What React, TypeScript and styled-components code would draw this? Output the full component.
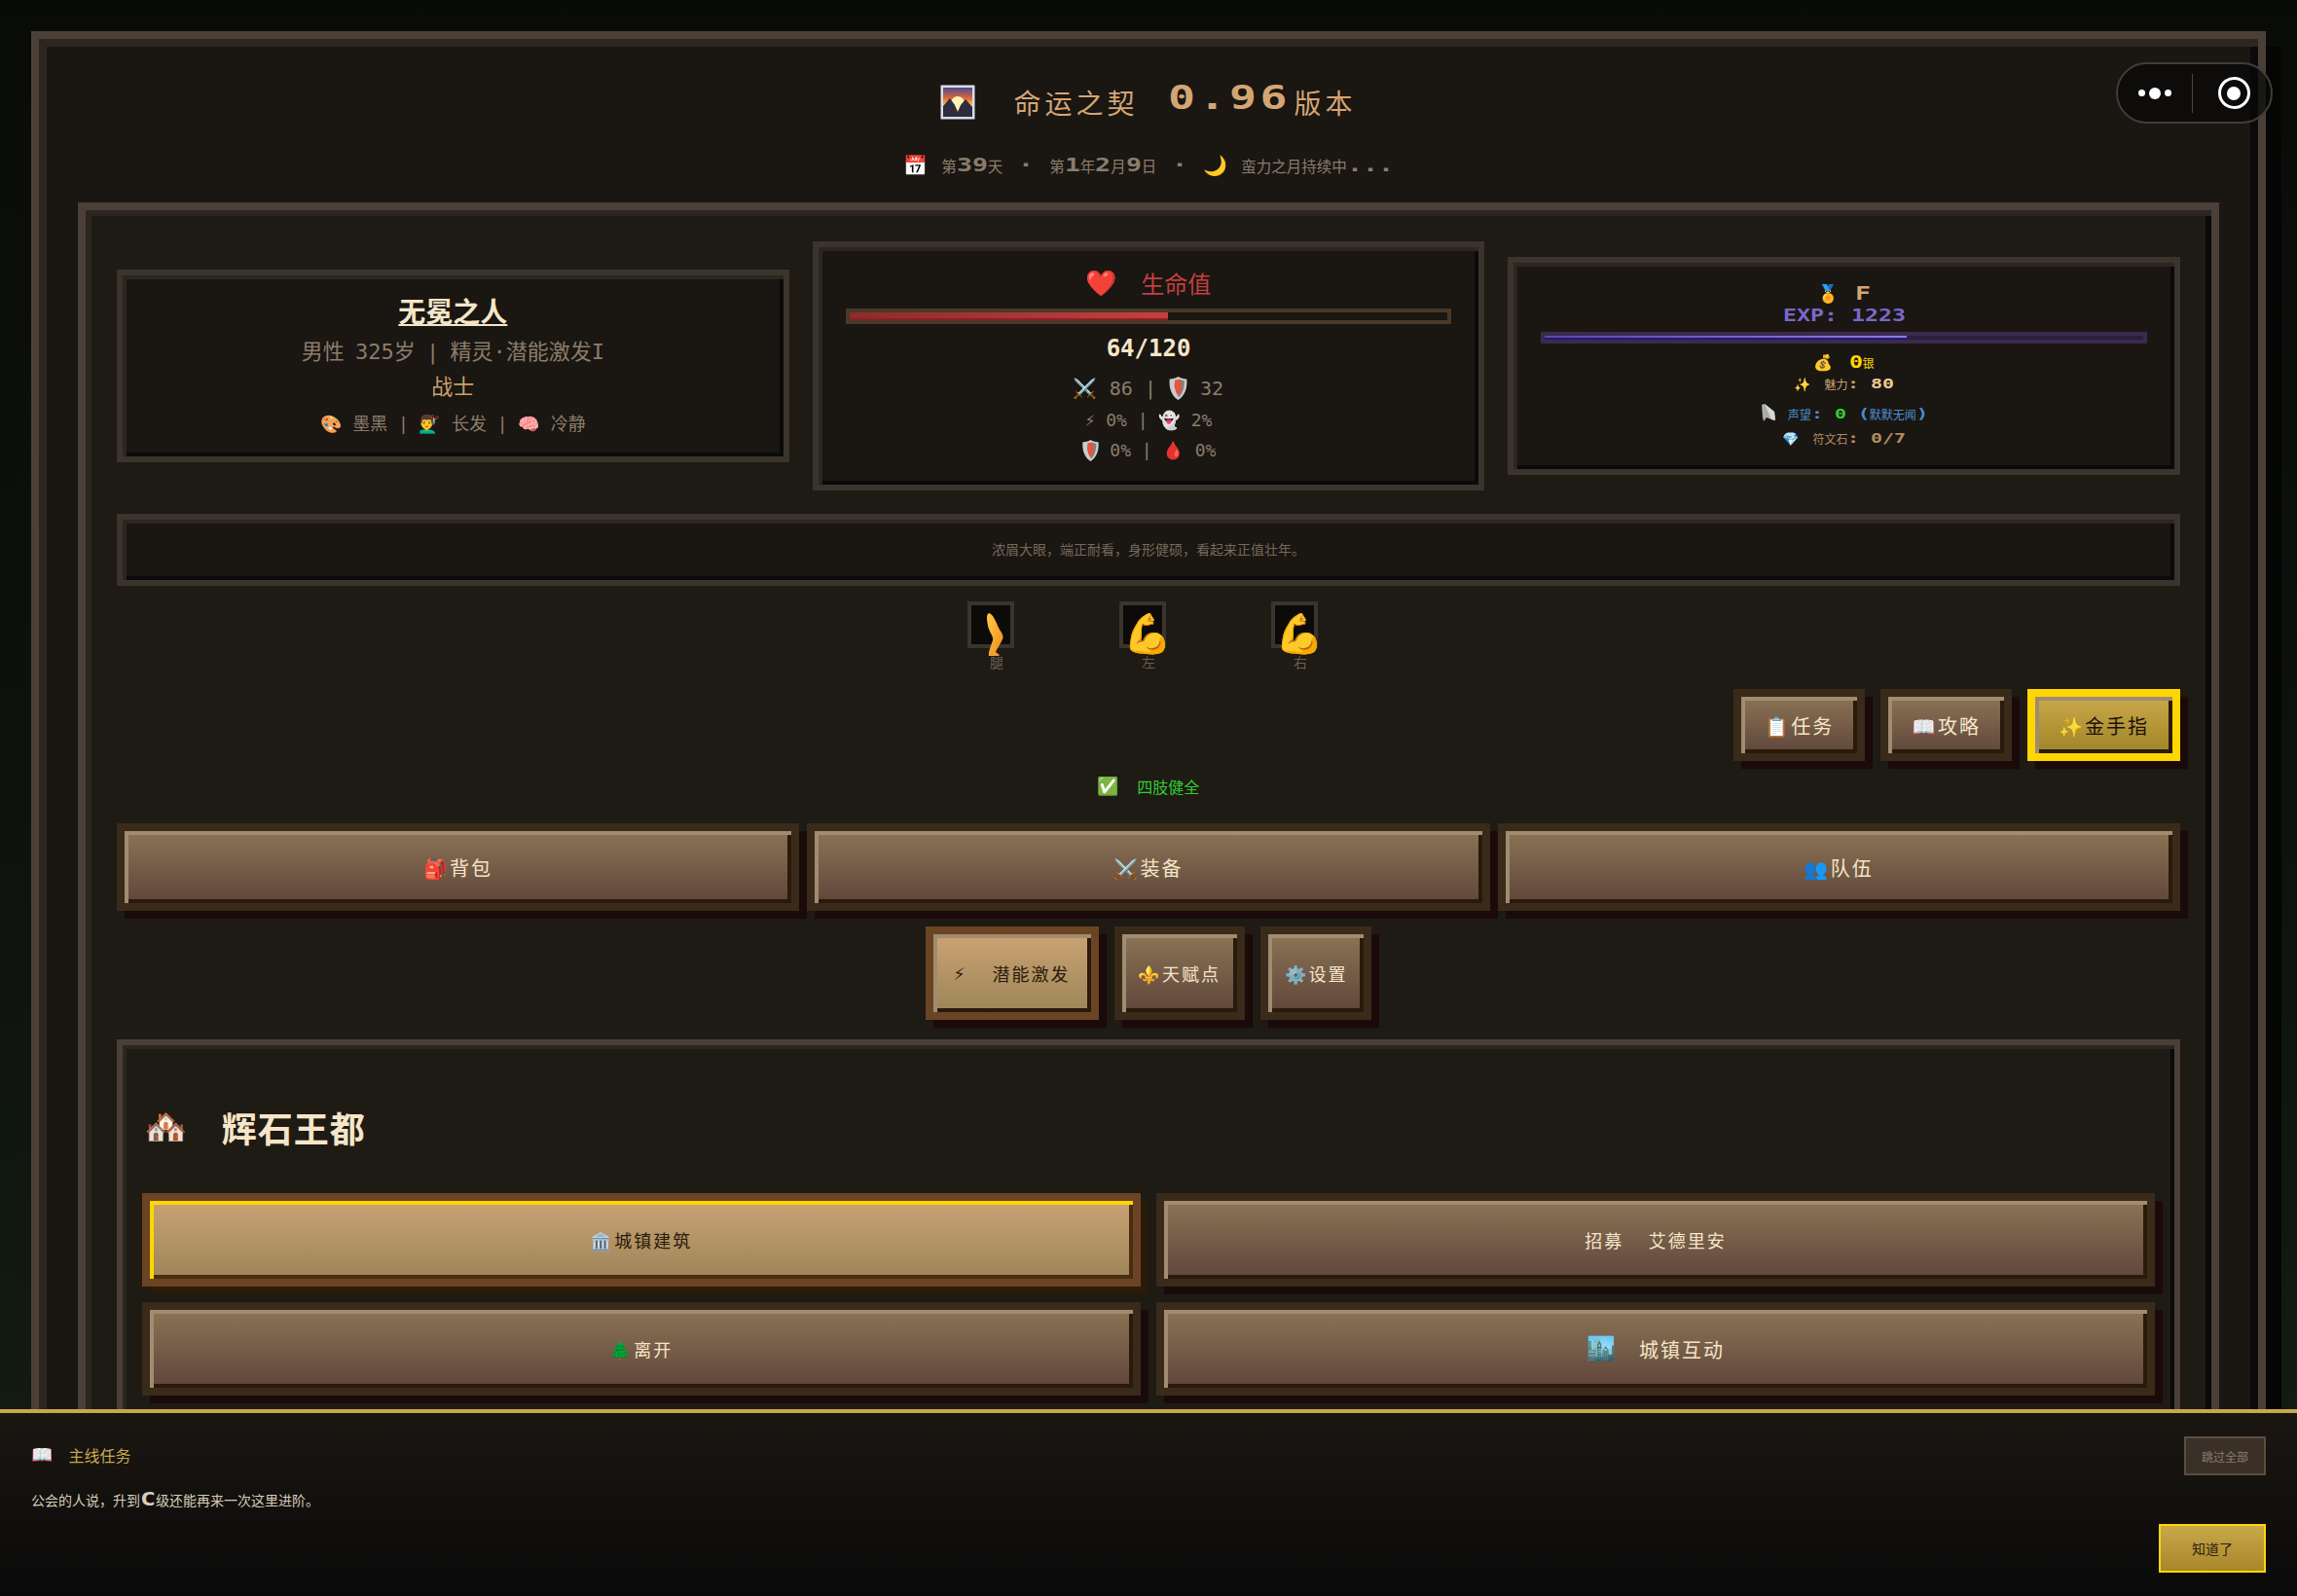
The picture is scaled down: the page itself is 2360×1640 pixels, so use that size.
import React from "react";
import styled, { createGlobalStyle, css } from "styled-components";

const GlobalStyle = createGlobalStyle`
  html, body {
    margin: 0;
    padding: 0;
    width: 2360px;
    height: 1640px;
    overflow: hidden;
    background: #0a0c08;
  }
  body {
    font-family: "DejaVu Sans Mono", "Noto Sans CJK SC", "Noto Color Emoji", monospace;
  }
  * { box-sizing: border-box; }
`;

const PIXEL_SCALE = 1.385;

const PixelBox = styled.span<{ $s: number; $n: number; $ls: number }>`
  display: inline-block;
  white-space: pre;
  font-family: "DejaVu Sans Mono", monospace;
  font-weight: 700;
  line-height: 1;
  font-size: ${(p) => p.$s * 1.2}px;
  letter-spacing: ${(p) => p.$ls / PIXEL_SCALE}px;
  width: calc(${(p) => p.$n * PIXEL_SCALE}ch + ${(p) => p.$n * p.$ls}px);
  transform: scaleX(${PIXEL_SCALE});
  transform-origin: left center;
  color: ${(p) => p.color || "inherit"};
`;

const Pixel = ({ s, ls = 0, color, children }: { s: number; ls?: number; color?: string; children: string }) => (
  <PixelBox $s={s} $n={children.length} $ls={ls} color={color}>
    {children}
  </PixelBox>
);

const SunriseIcon = () => (
  <svg width="36" height="36" viewBox="0 0 36 36">
    <defs>
      <linearGradient id="sky" x1="0" y1="0" x2="0" y2="1">
        <stop offset="0" stopColor="#4d4a94" />
        <stop offset="0.35" stopColor="#d8643c" />
        <stop offset="0.6" stopColor="#ffc24a" />
      </linearGradient>
    </defs>
    <rect x="0.5" y="0.5" width="35" height="35" fill="#d9dee8" />
    <rect x="3" y="3" width="30" height="30" fill="url(#sky)" />
    <circle cx="18" cy="19" r="7" fill="#fff3b8" />
    <path d="M3 33 V22 L10 14 L15 21 L18 28 L21 21 L26 15 L33 23 V33 Z" fill="#2e2c3e" />
  </svg>
);

const LegIcon = () => (
  <svg width="21" height="44" viewBox="0 0 21 44">
    <defs>
      <linearGradient id="leg" x1="0" y1="0" x2="1" y2="1">
        <stop offset="0" stopColor="#ffcb45" />
        <stop offset="1" stopColor="#ee8a1c" />
      </linearGradient>
    </defs>
    <path
      d="M3 0 C7 1 10 8 13 15 C15 19 19 23 17 27 C14 33 11 37 10 40 L14 43 L13 44 L3 44 C2 41 5 34 7 28 C8 24 3 19 2 13 C1 8 0 1 3 0 Z"
      fill="url(#leg)"
    />
  </svg>
);

const ShieldShape = styled.svg`
  vertical-align: -5px;
`;

const ShieldIcon = ({ w, h }: { w: number; h: number }) => (
  <ShieldShape width={w} height={h} viewBox="0 0 24 30">
    <path d="M12 0 C15 2 19 3 23 3 C24 14 21 24 12 30 C3 24 0 14 1 3 C5 3 9 2 12 0 Z" fill="#c9ccd0" />
    <path d="M12 3 C15 4 17 5 20 5 C20 14 18 22 12 27 Z" fill="#7d8086" />
    <path d="M8 4 L16 4 L15 8 L17 11 L15 14 L17 17 L14 21 L12 25 L9 20 L7 12 Z" fill="#e4573b" />
  </ShieldShape>
);

const HornIcon = () => (
  <svg width="16" height="20" viewBox="0 0 16 20">
    <path d="M1 2 L4 1 L14 9 L15 18 L11 17 L6 15 L3 19 L2 15 Z" fill="#a9acab" />
    <path d="M4 1 L14 9 L15 18 L11 17 Z" fill="#d6d8d6" />
  </svg>
);

const Page = styled.div`
  position: relative;
  width: 2360px;
  height: 1640px;
  overflow: hidden;
  padding: 32px;
  background: linear-gradient(180deg, #090b07 0%, #0d120c 50%, #141d14 100%);
`;

const Frame = styled.div`
  width: 2296px;
  min-height: 1700px;
  padding: 40px;
  background: #1a1612;
  border: 8px solid #4a4038;
  box-shadow: inset 8px 8px 0 #2d2620, inset -8px -8px 0 #0a0a0a, 16px 16px 0 #050505;
`;

const Capsule = styled.div`
  position: absolute;
  left: 2174px;
  top: 64px;
  width: 161px;
  height: 63px;
  display: flex;
  align-items: center;
  border: 2px solid #3f3d3a;
  border-radius: 32px;
  background: rgba(8, 8, 8, 0.72);
`;

const CapsuleSide = styled.div<{ $shift?: number }>`
  flex: 1;
  height: 100%;
  display: flex;
  align-items: center;
  justify-content: center;
  gap: 4px;
  padding-left: ${(p) => p.$shift || 0}px;
`;

const CapsuleLine = styled.div`
  width: 1px;
  height: 40px;
  background: #4a4845;
`;

const Dot = styled.i<{ $big?: boolean }>`
  display: block;
  width: ${(p) => (p.$big ? 12 : 7)}px;
  height: ${(p) => (p.$big ? 12 : 7)}px;
  border-radius: 50%;
  background: #fff;
`;

const Ring = styled.div`
  width: 33px;
  height: 33px;
  border: 3px solid #fff;
  border-radius: 50%;
  display: flex;
  align-items: center;
  justify-content: center;
  &::after {
    content: "";
    width: 14px;
    height: 14px;
    border-radius: 50%;
    background: #fff;
  }
`;

const TitleRow = styled.h1`
  margin: 0;
  height: 48px;
  padding-top: 1px;
  display: flex;
  align-items: center;
  justify-content: center;
  font-size: 28px;
  font-weight: 400;
  letter-spacing: 4px;
  color: #d4a574;
`;

const TitleIcon = styled.span`
  display: flex;
  margin-right: 39px;
`;

const Version = styled.span`
  margin: -6px 4px 0 30px;
`;

const SubLine = styled.div`
  margin-top: 30px;
  height: 24px;
  display: flex;
  align-items: center;
  justify-content: center;
  white-space: pre;
  font-size: 15.5px;
  color: #8b7d6b;
`;

const Em = styled.span<{ $size?: number; $gap?: number }>`
  font-size: ${(p) => p.$size || 20}px;
  margin-right: ${(p) => p.$gap || 0}px;
  line-height: 1;
  letter-spacing: 0;
`;

const Panel = styled.div`
  margin-top: 26px;
  padding: 32px;
  background: #1e1a14;
  border: 8px solid #4a4038;
  box-shadow: inset 6px 6px 0 #2d2620, inset -6px -6px 0 #0a0a0a;
`;

const TopRow = styled.div`
  display: grid;
  grid-template-columns: repeat(3, 1fr);
  gap: 24px;
  align-items: center;
`;

const Card = styled.div<{ $h: number; $top?: number }>`
  height: ${(p) => p.$h}px;
  display: flex;
  flex-direction: column;
  align-items: center;
  justify-content: center;
  padding: ${(p) => p.$top || 0}px 28px 0;
  background: #1a1612;
  border: 6px solid #3a342c;
  box-shadow: inset 4px 4px 0 #2a2620, inset -4px -4px 0 #0a0a0a;
  color: #8b7d6b;
`;

const Name = styled.div`
  margin-bottom: 5px;
  font-size: 28px;
  font-weight: 700;
  line-height: 34px;
  color: #f5e6c8;
  text-decoration: underline;
`;

const InfoLine = styled.div<{ $size: number; $color?: string; $h: number; $tight?: boolean }>`
  font-size: ${(p) => p.$size}px;
  line-height: ${(p) => p.$h}px;
  color: ${(p) => p.$color || "#8b7d6b"};
  white-space: pre;
  word-spacing: ${(p) => (p.$tight ? -2 : 0)}px;
`;

const HpTitle = styled.div`
  display: flex;
  align-items: center;
  gap: 24px;
  height: 34px;
  font-size: 24px;
  color: #c44040;
`;

const Bar = styled.div<{ $line: string; $bg: string; $h: number; $mt?: number }>`
  width: 100%;
  flex: none;
  height: ${(p) => p.$h}px;
  margin-top: ${(p) => p.$mt || 0}px;
  border: 4px solid ${(p) => p.$line};
  background: ${(p) => p.$bg};
`;

const Fill = styled.div<{ $fill: string; $shade: string }>`
  height: 100%;
  background: ${(p) => p.$fill};
  box-shadow: inset 0 -2px 0 ${(p) => p.$shade};
`;

const HpValue = styled.div`
  margin: 6px 0 4px;
  font-size: 24px;
  font-weight: 700;
  line-height: 38px;
  color: #f5e6c8;
`;

const RankLine = styled.div`
  display: flex;
  align-items: center;
  justify-content: center;
  height: 22px;
  color: #d4a574;
`;

const ExpLine = styled.div`
  height: 16px;
  margin: 4px 0 8px;
  display: flex;
  align-items: center;
  color: #7b68c8;
`;

const SmallLine = styled.div<{ $color?: string; $h: number; $mt?: number }>`
  height: ${(p) => p.$h}px;
  margin-top: ${(p) => p.$mt || 0}px;
  display: flex;
  align-items: center;
  justify-content: center;
  white-space: pre;
  font-size: 12px;
  color: ${(p) => p.$color || "#c9a06f"};
`;

const Desc = styled.div`
  margin-top: 24px;
  height: 74px;
  padding-bottom: 2px;
  display: flex;
  align-items: center;
  justify-content: center;
  font-size: 14px;
  color: #756959;
  background: #1a1612;
  border: 6px solid #3a342c;
  box-shadow: inset 4px 4px 0 #2a2620, inset -4px -4px 0 #0a0a0a;
`;

const Limbs = styled.div`
  margin-top: 16px;
  padding-right: 12px;
  display: flex;
  justify-content: center;
  gap: 108px;
`;

const Limb = styled.div`
  width: 48px;
  height: 70px;
  display: flex;
  flex-direction: column;
  align-items: center;
  position: relative;
`;

const LimbBox = styled.div`
  width: 48px;
  height: 48px;
  background: #0d0b09;
  border: 4px solid #3a342c;
`;

const LimbIcon = styled.span<{ $left: number; $top: number }>`
  position: absolute;
  display: flex;
  left: ${(p) => p.$left}px;
  top: ${(p) => p.$top}px;
  font-size: 40px;
  line-height: 44px;
`;

const LimbLabel = styled.span`
  margin: 8px 0 0 12px;
  font-size: 14px;
  line-height: 14px;
  color: #6b5f4f;
`;

const ActionRow = styled.div`
  margin-top: 20px;
  display: flex;
  justify-content: flex-end;
  gap: 16px;
`;

const raised = (bottom: string) => css`
  box-shadow: 8px 8px 0 #1a0a0a, inset 4px 4px 0 #a08c70, inset -4px -4px 0 ${bottom};
`;

const tones = {
  plain: css`
    background: linear-gradient(180deg, #8b7355 0%, #5f463a 100%);
    border-color: #3a2a1a;
    color: #f5e6c8;
    ${raised("#2a1a0a")}
  `,
  active: css`
    background: linear-gradient(180deg, #cba274 0%, #9c8558 100%);
    border-color: #6b4423;
    color: #2a1a0a;
    ${raised("#2a1a0a")}
  `,
  location: css`
    background: linear-gradient(180deg, #cba274 0%, #9c8558 100%);
    border-color: #6b4423;
    color: #2a1a0a;
    box-shadow: 8px 8px 0 #2a1a0a, inset 4px 4px 0 #ffd700, inset -4px -4px 0 #4a2c10;
  `,
  gold: css`
    background: linear-gradient(180deg, #c9a84a 0%, #a08428 100%);
    border-color: #ffd700;
    color: #1a1208;
    ${raised("#2a1a0a")}
  `,
};

const GameButton = styled.button<{ $tone?: keyof typeof tones; $h: number; $pad?: number; $size?: number }>`
  height: ${(p) => p.$h}px;
  padding: 0 ${(p) => p.$pad ?? 17}px;
  display: flex;
  align-items: center;
  justify-content: center;
  border: 8px solid;
  border-radius: 0;
  font-family: inherit;
  font-size: ${(p) => p.$size || 20}px;
  letter-spacing: 2px;
  white-space: pre;
  ${(p) => tones[p.$tone || "plain"]}
`;

const HealthLine = styled.div`
  height: 20px;
  margin-top: 16px;
  display: flex;
  align-items: center;
  justify-content: center;
  gap: 18px;
  font-size: 16px;
  color: #32cd32;
`;

const MainRow = styled.div`
  margin-top: 28px;
  display: grid;
  grid-template-columns: repeat(3, 1fr);
  gap: 8px;
`;

const SubRow = styled.div`
  margin-top: 16px;
  display: flex;
  justify-content: center;
  gap: 16px;
`;

const Location = styled.div`
  margin-top: 20px;
  padding: 62px 20px 40px;
  background: #1e1a14;
  border: 6px solid #4a4038;
  box-shadow: inset 4px 4px 0 #2d2620, inset -4px -4px 0 #0a0a0a;
`;

const LocationTitle = styled.h2`
  margin: 0 0 46px;
  height: 44px;
  display: flex;
  align-items: center;
  gap: 35px;
  padding-left: 2px;
  font-size: 36px;
  font-weight: 700;
  letter-spacing: 1px;
  color: #f5e6c8;
`;

const LocationGrid = styled.div`
  display: grid;
  grid-template-columns: repeat(2, 1fr);
  gap: 16px;
`;

const Dialog = styled.div`
  position: absolute;
  left: 0;
  right: 0;
  bottom: 0;
  height: 192px;
  padding: 31px 32px 24px;
  background: linear-gradient(180deg, #1a1612 0%, #0a0a0a 100%);
  border-top: 4px solid #c9a84a;
`;

const DialogHead = styled.div`
  height: 24px;
  display: flex;
  align-items: center;
  gap: 16px;
  font-size: 16px;
  color: #c9a84a;
`;

const DialogText = styled.div`
  margin-top: 20px;
  height: 28px;
  display: flex;
  align-items: center;
  white-space: pre;
  font-size: 14px;
  color: #d8cdb8;
`;

const SkipButton = styled.button`
  position: absolute;
  right: 32px;
  top: 24px;
  width: 84px;
  height: 40px;
  padding: 0;
  font-family: inherit;
  font-size: 12px;
  color: #8b7d6b;
  background: #3a3028;
  border: 2px solid #5a4f3f;
`;

const OkButton = styled.button`
  position: absolute;
  right: 32px;
  bottom: 24px;
  width: 110px;
  height: 50px;
  padding: 0;
  font-family: inherit;
  font-size: 14px;
  color: #2a2010;
  background: linear-gradient(180deg, #c9a84a 0%, #a8862a 100%);
  border: 2px solid #ffd700;
`;

export default function App() {
  return (
    <Page>
      <GlobalStyle />
      <Frame>
        <TitleRow>
          <TitleIcon>
            <SunriseIcon />
          </TitleIcon>
          命运之契
          <Version>
            <Pixel s={28} ls={3.5}>0.96</Pixel>
          </Version>
          版本
        </TitleRow>
        <SubLine>
          <Em $size={20} $gap={14}>📅</Em>
          第<Pixel s={16}>39</Pixel>天<Pixel s={16}> · </Pixel>第<Pixel s={16}>1</Pixel>年<Pixel s={16}>2</Pixel>月
          <Pixel s={16}>9</Pixel>日<Pixel s={16}> · </Pixel>
          <Em $size={20} $gap={14}>🌙</Em>
          蛮力之月持续中<Pixel s={16}>...</Pixel>
        </SubLine>
        <Panel>
          <TopRow>
            <Card $h={198} $top={8}>
              <Name>无冕之人</Name>
              <InfoLine $size={22} $h={36} $tight>男性 325岁 | 精灵·潜能激发I</InfoLine>
              <InfoLine $size={22} $h={36} $color="#c9a06f">战士</InfoLine>
              <InfoLine $size={18} $h={40}>🎨 墨黑 | 💇‍♂️ 长发 | 🧠 冷静</InfoLine>
            </Card>
            <Card $h={256}>
              <HpTitle>
                <Em $size={26}>❤️</Em>
                生命值
              </HpTitle>
              <Bar $line="#4a3828" $bg="#1a1612" $h={16} $mt={9}>
                <Fill $fill="linear-gradient(90deg, #8b2c2c, #c44040)" $shade="#8b2020" style={{ width: "53.3%" }} />
              </Bar>
              <HpValue>64/120</HpValue>
              <InfoLine $size={20} $h={36}>
                ⚔️ 86 | <ShieldIcon w={21} h={24} /> 32
              </InfoLine>
              <InfoLine $size={18} $h={30}>⚡ 0% | 👻 2%</InfoLine>
              <InfoLine $size={18} $h={32}>
                <ShieldIcon w={19} h={22} /> 0% | 🩸 0%
              </InfoLine>
            </Card>
            <Card $h={224}>
              <RankLine>
                <Em $size={18} $gap={16}>🏅</Em>
                <Pixel s={16}>F</Pixel>
              </RankLine>
              <ExpLine>
                <Pixel s={14}>EXP: 1223</Pixel>
              </ExpLine>
              <Bar $line="#3a2a50" $bg="#2a1f40" $h={12}>
                <Fill $fill="linear-gradient(90deg, #5a48a8, #8b7bee)" $shade="#261a6a" style={{ width: "60.5%" }} />
              </Bar>
              <SmallLine $h={22} $mt={9} $color="#ffd700">
                <Em $size={16} $gap={16}>💰</Em>
                <Pixel s={14}>0</Pixel>银
              </SmallLine>
              <SmallLine $h={22}>
                <Em $size={14} $gap={14}>✨</Em>
                魅力<Pixel s={12}>: </Pixel>
                <Pixel s={12} color="#f0c890">80</Pixel>
              </SmallLine>
              <SmallLine $h={28} $mt={6} $color="#4a90d0">
                <Em $gap={12}>
                  <HornIcon />
                </Em>
                声望<Pixel s={12}>: </Pixel>
                <Pixel s={12} color="#32cd32">0 </Pixel>
                <Pixel s={12}>(</Pixel>默默无闻<Pixel s={12}>)</Pixel>
              </SmallLine>
              <SmallLine $h={22} $color="#b08c60">
                <Em $size={14} $gap={14}>💎</Em>
                符文石<Pixel s={12}>: </Pixel>
                <Pixel s={12}>0/7</Pixel>
              </SmallLine>
            </Card>
          </TopRow>
          <Desc>浓眉大眼，端正耐看，身形健硕，看起来正值壮年。</Desc>
          <Limbs>
            <Limb>
              <LimbBox />
              <LimbIcon $left={19} $top={12}>
                <LegIcon />
              </LimbIcon>
              <LimbLabel>腿</LimbLabel>
            </Limb>
            <Limb>
              <LimbBox />
              <LimbIcon $left={4} $top={11}>💪</LimbIcon>
              <LimbLabel>左</LimbLabel>
            </Limb>
            <Limb>
              <LimbBox />
              <LimbIcon $left={4} $top={11}>💪</LimbIcon>
              <LimbLabel>右</LimbLabel>
            </Limb>
          </Limbs>
          <ActionRow>
            <GameButton $h={74} $pad={24}>📋任务</GameButton>
            <GameButton $h={74} $pad={24}>📖攻略</GameButton>
            <GameButton $h={74} $pad={24} $tone="gold">✨金手指</GameButton>
          </ActionRow>
          <HealthLine>
            <Em $size={18}>✅</Em>
            四肢健全
          </HealthLine>
          <MainRow>
            <GameButton $h={90}>🎒背包</GameButton>
            <GameButton $h={90}>⚔️装备</GameButton>
            <GameButton $h={90}>👥队伍</GameButton>
          </MainRow>
          <SubRow>
            <GameButton $h={96} $size={18} $pad={21} $tone="active">
              <Em $size={20} $gap={28}>⚡</Em>潜能激发
            </GameButton>
            <GameButton $h={96} $size={18}>⚜️天赋点</GameButton>
            <GameButton $h={96} $size={18}>⚙️设置</GameButton>
          </SubRow>
          <Location>
            <LocationTitle>
              <Em $size={36}>🏘️</Em>
              辉石王都
            </LocationTitle>
            <LocationGrid>
              <GameButton $h={96} $size={18} $tone="location">🏛️城镇建筑</GameButton>
              <GameButton $h={96} $size={18}>招募  艾德里安</GameButton>
              <GameButton $h={96} $size={18}>🌲离开</GameButton>
              <GameButton $h={96} $size={20}>
                <Em $size={24} $gap={24}>🏙️</Em>城镇互动
              </GameButton>
            </LocationGrid>
          </Location>
        </Panel>
      </Frame>
      <Capsule>
        <CapsuleSide>
          <Dot />
          <Dot $big />
          <Dot />
        </CapsuleSide>
        <CapsuleLine />
        <CapsuleSide $shift={5}>
          <Ring />
        </CapsuleSide>
      </Capsule>
      <Dialog>
        <DialogHead>
          <Em $size={18}>📖</Em>
          主线任务
        </DialogHead>
        <DialogText>
          公会的人说，升到<Pixel s={16}>C</Pixel>级还能再来一次这里进阶。
        </DialogText>
        <SkipButton>跳过全部</SkipButton>
        <OkButton>知道了</OkButton>
      </Dialog>
    </Page>
  );
}
